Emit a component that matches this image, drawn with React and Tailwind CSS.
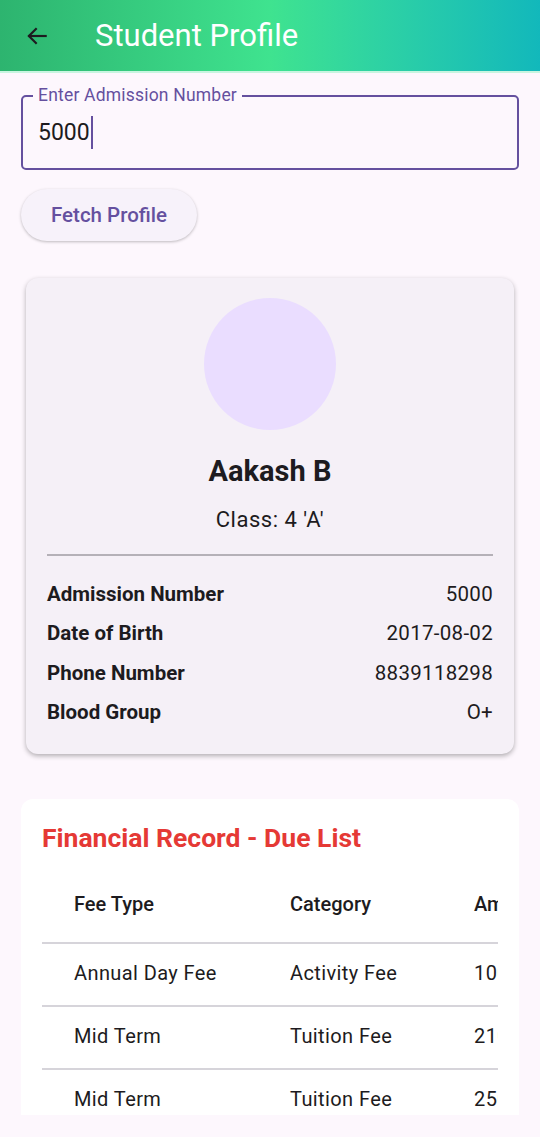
export default function App() {
  const details = [
    { label: "Admission Number", value: "5000" },
    { label: "Date of Birth", value: "2017-08-02" },
    { label: "Phone Number", value: "8839118298" },
    { label: "Blood Group", value: "O+" },
  ];

  const dues = [
    { type: "Annual Day Fee", category: "Activity Fee", amount: "1000" },
    { type: "Mid Term", category: "Tuition Fee", amount: "2100" },
    { type: "Mid Term", category: "Tuition Fee", amount: "2500" },
  ];

  return (
    <div className="h-[1137px] w-[540px] flex flex-col bg-[#fdf7fd] font-['Roboto',sans-serif] overflow-hidden">
      <header className="h-[73px] shrink-0 flex items-center bg-gradient-to-r from-[#2db46f] via-[#3fe38f] to-[#12b8bb] border-b-2 border-[#c8f5e0]">
        <button className="ml-[22px] w-[30px] h-[30px] flex items-center justify-center text-[#1d1b20]">
          <svg width="26" height="26" viewBox="0 0 24 24" fill="none" stroke="currentColor" strokeWidth="2" strokeLinecap="square">
            <path d="M20 12H5" />
            <path d="M11 5.5L4.5 12L11 18.5" />
          </svg>
        </button>
        <h1 className="ml-[43px] text-white text-[31px] leading-none">Student Profile</h1>
      </header>

      <main className="flex-1 min-h-0 overflow-hidden flex flex-col px-[21px] pt-[22px]">
        <div className="relative shrink-0 h-[75px] border-2 border-[#65509f] rounded-[5px] flex items-center px-[15px]">
          <span className="absolute -top-[13px] left-[10px] px-[5px] bg-[#fdf7fd] text-[#65509f] text-[17.5px] leading-[22px] tracking-[0.2px]">
            Enter Admission Number
          </span>
          <span className="text-[23px] text-[#1d1b20] leading-[28px]">5000</span>
          <span className="w-[2px] h-[33px] bg-[#65509f] ml-[1px]" />
        </div>

        <button className="mt-[19px] shrink-0 self-start h-[52px] w-[176px] rounded-full bg-[#f7f2fa] shadow-[0_1px_3px_rgba(0,0,0,0.25)] text-[#65509f] text-[20.5px] font-medium">
          Fetch Profile
        </button>

        <section className="mt-[37px] shrink-0 mx-[5px] rounded-[12px] bg-[#f5f0f7] shadow-[0_2px_5px_rgba(0,0,0,0.3)] px-[21px] pt-[20px] pb-[28px] flex flex-col items-center">
          <div className="w-[132px] h-[132px] rounded-full bg-[#eaddff]" />
          <h2 className="mt-[24px] text-[29px] font-bold text-[#1d1b20] leading-[34px]">Aakash B</h2>
          <p className="mt-[18px] text-[22px] tracking-[0.5px] text-[#1d1b20] leading-[28px]">Class: 4 'A'</p>
          <div className="mt-[20px] w-full h-[2px] bg-[#b5b1b8]" />
          <div className="mt-[25px] w-full flex flex-col gap-[13.5px]">
            {details.map((d) => (
              <div key={d.label} className="flex justify-between items-center h-[26px] text-[20.5px] text-[#1d1b20]">
                <span className="font-bold">{d.label}</span>
                <span className="tracking-[0.3px]">{d.value}</span>
              </div>
            ))}
          </div>
        </section>

        <section className="mt-[45px] shrink-0 rounded-t-[12px] bg-white px-[21px] pt-[23px] h-[400px]">
          <h3 className="text-[26.5px] font-bold text-[#e53935] leading-[32px]">Financial Record - Due List</h3>
          <div className="mt-[13px] overflow-hidden">
            <table className="w-[540px] text-left text-[#1d1b20] text-[20px]">
              <thead>
                <tr className="h-[76px] border-b-2 border-[#d6d4da]">
                  <th className="pl-[32px] w-[248px] font-medium">Fee Type</th>
                  <th className="w-[184px] font-medium">Category</th>
                  <th className="font-medium">Amount</th>
                </tr>
              </thead>
              <tbody>
                {dues.map((r, i) => (
                  <tr key={i} className="h-[63px] border-b-2 border-[#d6d4da]">
                    <td className="pl-[32px] pb-[2px] tracking-[0.4px]">{r.type}</td>
                    <td className="pb-[2px] tracking-[0.4px]">{r.category}</td>
                    <td className="pb-[2px] tracking-[0.4px]">{r.amount}</td>
                  </tr>
                ))}
              </tbody>
            </table>
          </div>
        </section>
      </main>
      <div className="h-[22px] shrink-0 bg-[#fdf7fd]" />
    </div>
  );
}
